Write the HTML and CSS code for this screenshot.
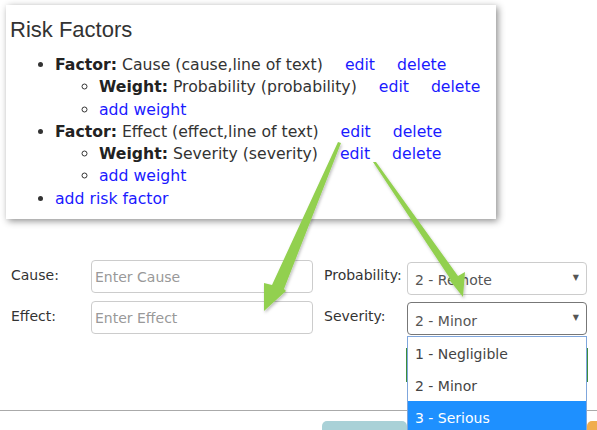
FILE: index.html
```html
<!DOCTYPE html>
<html lang="en">
    <head>
        <meta charset="UTF-8" />
        <title>Risk Factors</title>
        <link rel="stylesheet" href="styles.css">
    </head>
    <body>
        <div class="panel">
            <h2 class="title">Risk Factors</h2>
            <ul class="factors">
                <li>
                    <b>Factor:</b> Cause (cause,line of text) <a href="#">edit</a><a href="#">delete</a>
                    <ul>
                        <li><b>Weight:</b> Probability (probability) <a href="#">edit</a><a href="#">delete</a></li>
                        <li><a class="first" href="#">add weight</a></li>
                    </ul>
                </li>
                <li>
                    <b>Factor:</b> Effect (effect,line of text) <a href="#">edit</a><a href="#">delete</a>
                    <ul>
                        <li><b>Weight:</b> Severity (severity) <a href="#">edit</a><a href="#">delete</a></li>
                        <li><a class="first" href="#">add weight</a></li>
                    </ul>
                </li>
                <li><a class="first" href="#">add risk factor</a></li>
            </ul>
        </div>

        <form class="form">
            <label>Cause:</label>
            <input type="text" placeholder="Enter Cause" />
            <label>Probability:</label>
            <div class="select">2 - Remote<span class="caret">&#9660;</span></div>

            <label>Effect:</label>
            <input type="text" placeholder="Enter Effect" />
            <label>Severity:</label>
            <div class="select focus">2 - Minor<span class="caret">&#9660;</span>
                <ul class="options">
                    <li>1 - Negligible</li>
                    <li>2 - Minor</li>
                    <li class="active">3 - Serious</li>
                </ul>
            </div>

            <span></span>
            <span></span>
            <span></span>
            <div class="level"></div>
        </form>

        <div class="footer">
            <span class="btn save"></span>
            <span class="btn cancel"></span>
        </div>

        <!-- 箭头 -->
        <svg class="arrows" width="597" height="430" viewBox="0 0 597 430">
            <defs>
                <filter id="shadow" x="-20%" y="-20%" width="140%" height="140%">
                    <feDropShadow dx="1" dy="2" stdDeviation="1.5" flood-color="#000" flood-opacity="0.25" />
                </filter>
            </defs>
            <g fill="#92d050" filter="url(#shadow)">
                <polygon points="338,142 341,143 284,289 286,291 264,311 264,283 272,285" />
                <polygon points="373,162 376,162 458,276 465,272 463,297 447,277 451,280" />
            </g>
        </svg>
    </body>
</html>
```

FILE: styles.css
```css
body {
    margin: 0;
    font-family: "DejaVu Sans", Tahoma, sans-serif;
    color: #333;
    background: #fff;
    position: relative;
    width: 597px;
    height: 430px;
    overflow: hidden;
}
.panel {
    width: 482px;
    margin: 5px 0 0 6px;
    padding: 1px 4px 9px;
    background: #fff;
    box-shadow: 2px 2px 7px rgba(0, 0, 0, 0.45);
}
.title {
    margin: 11px 0 11px;
    font-family: "Liberation Sans", Arial, sans-serif;
    font-weight: normal;
    font-size: 22px;
}
.factors {
    margin: 0;
    padding-left: 45px;
    font-size: 15.7px;
    line-height: 22.3px;
}
.factors ul {
    margin: 0;
    padding-left: 44px;
    list-style: circle;
}
.factors b {
    color: #222;
}
.factors a {
    color: #1a1aff;
    text-decoration: none;
    margin-left: 22px;
}
.factors a:first-of-type {
    margin-left: 17px;
}
.factors a.first {
    margin-left: 0;
}

.form {
    display: grid;
    grid-template-columns: 69px 222px 72px 180px;
    grid-auto-rows: 33px;
    column-gap: 11px;
    row-gap: 8px;
    margin: 41px 0 0 11px;
    font-size: 14px;
}
.form label {
    align-self: center;
    margin-top: -4px;
    color: #333;
}
.form input {
    box-sizing: border-box;
    height: 33px;
    border: 1px solid #ccc;
    border-radius: 4px;
    padding: 0 3px;
    font: inherit;
    font-size: 14px;
}
.form input::placeholder {
    color: #999;
}
.select {
    position: relative;
    box-sizing: border-box;
    height: 33px;
    margin-top: 2px;
    border: 1px solid #ccc;
    border-radius: 4px;
    padding: 9px 7px 0;
    color: #555;
}
.select.focus {
    margin-top: 1px;
    padding-top: 10px;
    border-color: #777;
}
.caret {
    position: absolute;
    right: 7px;
    top: 10px;
    font-size: 8px;
    color: #555;
}
.level {
    box-sizing: border-box;
    margin: 6px -1px 0;
    height: 34px;
    border: 1px solid #3c8d3c;
}
.options {
    position: absolute;
    z-index: 2;
    left: -1px;
    right: -1px;
    top: 33px;
    margin: 0;
    padding: 0;
    list-style: none;
    background: #fff;
    border: 1px solid #7fa6dc;
    font-size: 14px;
}
.options li {
    height: 32px;
    line-height: 35px;
    padding-left: 7px;
    color: #444;
}
.options li.active {
    background: #1e90ff;
    color: #fff;
}

.footer {
    margin-top: 35px;
    border-top: 1px solid #aaa;
    height: 30px;
    position: relative;
}
.btn {
    position: absolute;
    top: 10px;
    height: 20px;
    border-radius: 5px 5px 0 0;
}
.save {
    left: 322px;
    width: 85px;
    background: #a9d1d7;
}
.cancel {
    left: 587px;
    width: 20px;
    background: #f0ad4e;
}

.arrows {
    position: absolute;
    left: 0;
    top: 0;
    z-index: 3;
    pointer-events: none;
}
```
